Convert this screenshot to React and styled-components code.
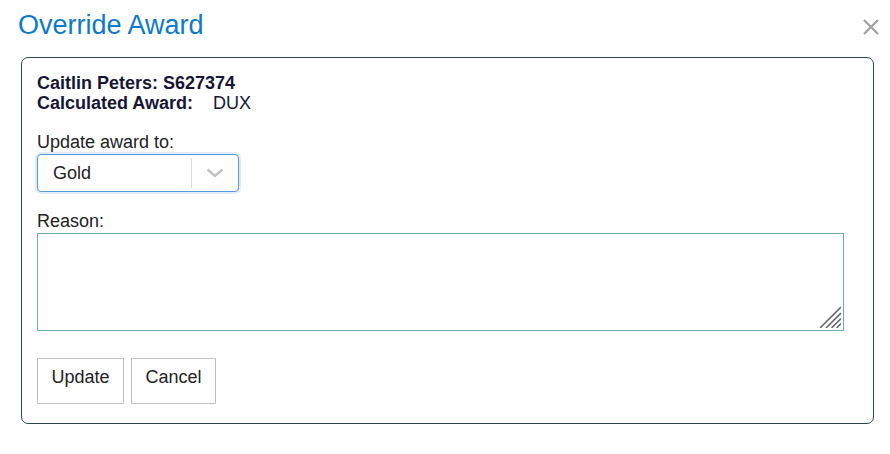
import React, { useState } from 'react'
import styled, { createGlobalStyle } from 'styled-components'

const GlobalStyle = createGlobalStyle`
    body {
        margin: 0;
        background: #fff;
        font-family: "Liberation Sans", Arial, sans-serif;
        color: #222;
    }
`;

const Dialog = styled.div`
    width: 890px;
    height: 454px;
    box-sizing: border-box;
    padding-top: 9px;
`;

const Header = styled.div`
    display: flex;
    justify-content: space-between;
    align-items: flex-start;
    padding: 0 10px 0 18px;
    height: 32px;
`;

const Title = styled.h1`
    margin: 0;
    font-size: 27px;
    line-height: 32px;
    font-weight: normal;
    color: #0b7ac7;
`;

const CloseButton = styled.button`
    border: 0;
    background: none;
    padding: 0;
    margin-top: 9px;
    width: 18px;
    height: 18px;
    cursor: pointer;
    svg {
        display: block;
    }
`;

const Panel = styled.div`
    margin: 16px 16px 0 21px;
    border: 1px solid #2e474c;
    border-radius: 7px;
    padding: 15px 16px 19px 15px;
    font-size: 18px;
    line-height: 20px;
`;

const InfoLine = styled.div`
    color: #161634;
    font-weight: bold;
    span.value {
        font-weight: normal;
        color: #161634;
    }
    span.label {
        display: inline-block;
        width: 176px;
    }
`;

const FormGroup = styled.div`
    margin-top: 19px;
`;

const Label = styled.label`
    display: block;
    color: #222;
    margin-bottom: 2px;
`;

const SelectBox = styled.div`
    width: 202px;
    height: 38px;
    box-sizing: border-box;
    border: 1px solid #5c98dc;
    border-radius: 4px;
    box-shadow: 0 0 0 2px rgba(120, 170, 230, 0.22);
    display: flex;
    align-items: center;
    background: #fff;
    cursor: pointer;
`;

const SelectValue = styled.div`
    flex: 1;
    padding-left: 15px;
    color: #222;
`;

const Indicator = styled.div`
    width: 46px;
    height: 30px;
    border-left: 1px solid #d9d9d9;
    display: flex;
    align-items: center;
    justify-content: center;
`;

const AreaWrap = styled.div`
    position: relative;
    width: 807px;
    height: 98px;
`;

const TextArea = styled.textarea`
    width: 100%;
    height: 100%;
    box-sizing: border-box;
    border: 1px solid #72abad;
    border-radius: 0;
    resize: none;
    font-family: inherit;
    font-size: 18px;
    padding: 4px 6px;
    outline: none;
`;

const Grip = styled.svg`
    position: absolute;
    right: 3px;
    bottom: 3px;
    pointer-events: none;
`;

const Actions = styled.div`
    display: flex;
    gap: 7px;
    margin-top: 27px;
`;

const Button = styled.button`
    width: ${p => p.$width}px;
    height: 46px;
    padding: 0 0 7px;
    border: 1px solid #c2c2c2;
    border-radius: 0;
    background: #fff;
    color: #222;
    font-family: inherit;
    font-size: 18px;
    cursor: pointer;
`;

export default function App() {
    const [reason, setReason] = useState("")

    return (
        <>
            <GlobalStyle />
            <Dialog>
                <Header>
                    <Title>Override Award</Title>
                    <CloseButton aria-label="Close">
                        <svg width="18" height="18" viewBox="0 0 18 18">
                            <path d="M2 2 L16 16 M16 2 L2 16" stroke="#a3a3a3" strokeWidth="2.4" strokeLinecap="butt" />
                        </svg>
                    </CloseButton>
                </Header>
                <Panel>
                    <InfoLine>Caitlin Peters: S627374</InfoLine>
                    <InfoLine>
                        <span className="label">Calculated Award:</span>
                        <span className="value">DUX</span>
                    </InfoLine>

                    <FormGroup>
                        <Label>Update award to:</Label>
                        <SelectBox>
                            <SelectValue>Gold</SelectValue>
                            <Indicator>
                                <svg width="18" height="10" viewBox="0 0 18 10">
                                    <path d="M1.5 1.5 L9 8 L16.5 1.5" fill="none" stroke="#c2c2c2" strokeWidth="2.4" />
                                </svg>
                            </Indicator>
                        </SelectBox>
                    </FormGroup>

                    <FormGroup>
                        <Label>Reason:</Label>
                        <AreaWrap>
                            <TextArea value={reason} onChange={e => setReason(e.target.value)} />
                            <Grip width="22" height="22" viewBox="0 0 22 22">
                                <path d="M1 22 L22 1 M7 22 L22 7 M12.5 22 L22 12.5 M17.5 22 L22 17.5" stroke="#6a6a6a" strokeWidth="1.6" />
                            </Grip>
                        </AreaWrap>
                    </FormGroup>

                    <Actions>
                        <Button $width={87}>Update</Button>
                        <Button $width={85}>Cancel</Button>
                    </Actions>
                </Panel>
            </Dialog>
        </>
    )
}
